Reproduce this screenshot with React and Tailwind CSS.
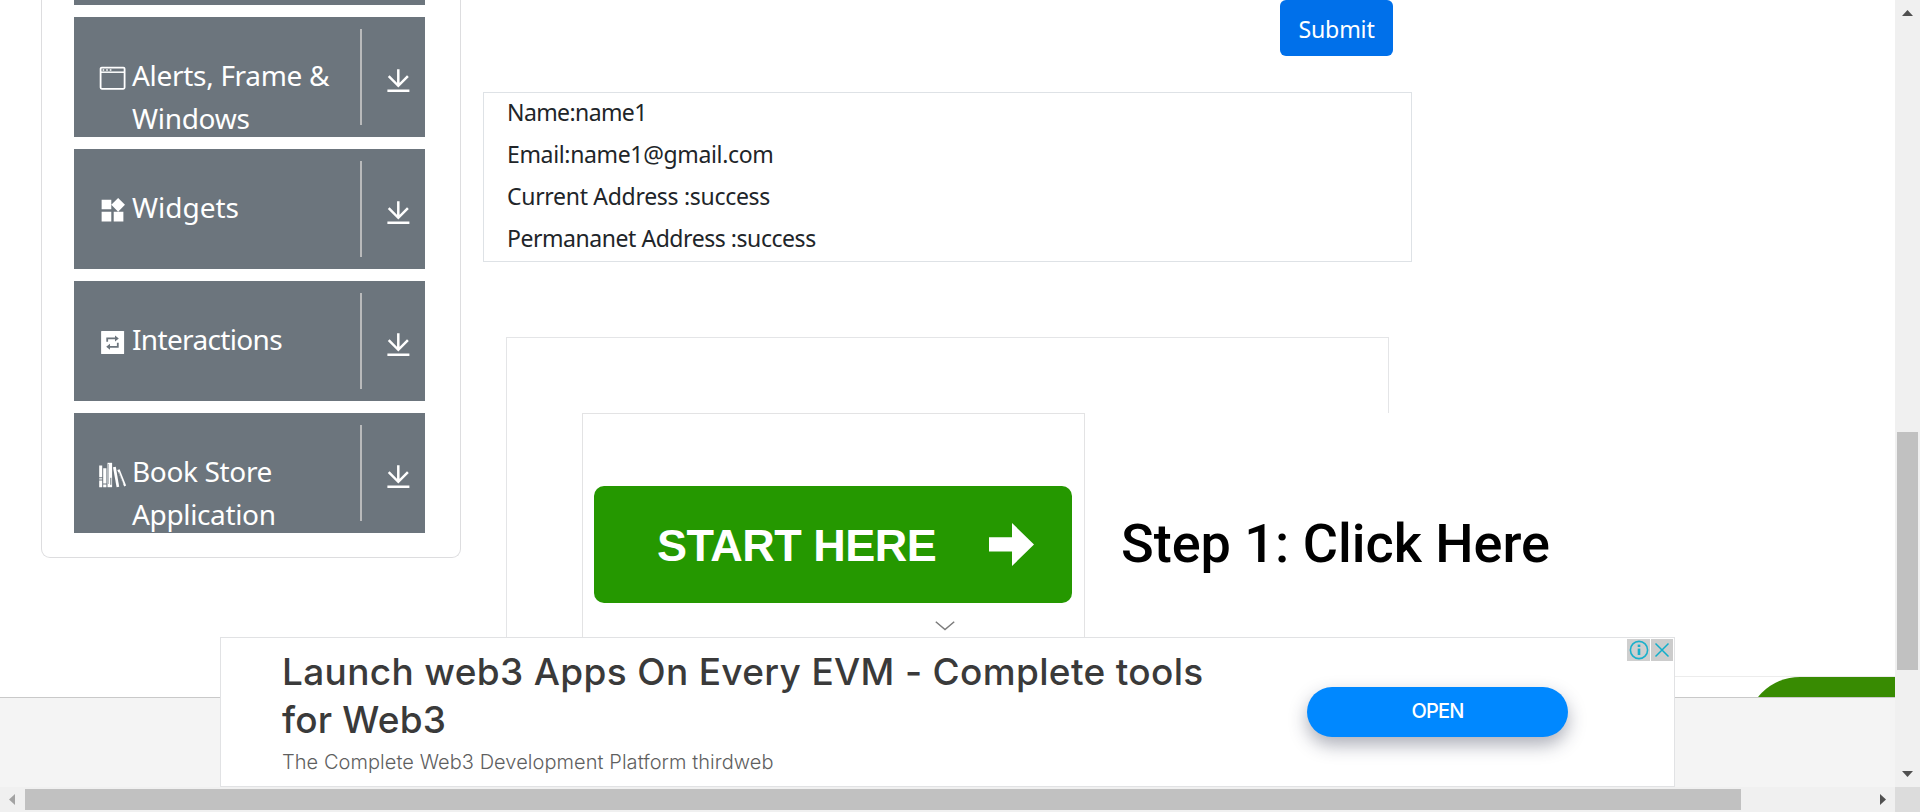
const BrowserIcon = () => (
  <svg viewBox="0 0 29 29" className="size-[29px]" fill="none" stroke="#fff">
    <rect x="2.6" y="3.6" width="24" height="21.2" rx="1.2" strokeWidth="1.8" />
    <path d="M2.6 8.2h24" strokeWidth="1.5" />
    <path d="M4.6 6h1.6M8.2 6h1.6M11.8 6h1.6" strokeWidth="1.5" />
  </svg>
);

const WidgetsIcon = () => (
  <svg viewBox="0 0 24 24" className="size-[29px]" fill="#fff">
    <path d="M13 13v8h8v-8h-8zM3 21h8v-8H3v8zM3 3v8h8V3H3zm13.66-1.31L11 7.34 16.66 13l5.66-5.66-5.66-5.65z" />
  </svg>
);

const RepeatIcon = () => (
  <svg viewBox="0 0 29 29" className="size-[29px]">
    <rect x="3.1" y="3" width="23" height="23" rx="0.6" fill="#fff" />
    <g fill="none" stroke="#6c757d" strokeWidth="1.8">
      <path d="M9.2 13.8v-3.4h8.6" />
      <path d="M19.8 14.8v4h-8.6" />
    </g>
    <path d="M17 7.4l3.8 3-3.8 3zM12 15.8l-3.8 3 3.8 3z" fill="#6c757d" />
  </svg>
);

const BooksIcon = () => (
  <svg viewBox="0 0 29 29" className="size-[29px]">
    <path d="M1.2 5.5h3v11.8h-3zM1.2 18.3h3v1.3h-3zM1.2 20.5h3v6.7h-3z" fill="#fff" />
    <path d="M5.2 8.2h3.2v15.2H5.2zM5.2 24.4h3.2v2.8H5.2z" fill="#fff" />
    <path d="M9.5 2.8h4.6v24.4H9.5z" fill="#fff" />
    <path d="M9.5 4h1.4v20H9.5z" fill="#b4b9be" />
    <path d="M12.8 17.8v7" stroke="#6c757d" strokeWidth="1" />
    <path d="M15 7.2l2.8-.4 3.4 20-2.6.4z" fill="#fff" />
    <path d="M19.3 10l2.3-.8 6.5 16.4-1.9.9z" fill="#fff" />
    <path d="M20.7 12.2l4.4 11.6" stroke="#6c757d" strokeWidth="0.7" />
  </svg>
);

const DownloadIcon = () => (
  <svg viewBox="0 0 24 26" className="h-[26px] w-[24px]" fill="none" stroke="#fff" strokeWidth="2.5">
    <path d="M11.3 1.2v17M1.7 8.2l9.6 9.6 9.6-9.6M0.4 22.8h22" />
  </svg>
);

const MENU = [
  { label: 'Alerts, Frame & Windows', Icon: BrowserIcon, tracking: 'tracking-[-0.3px]' },
  { label: 'Widgets', Icon: WidgetsIcon, tracking: 'tracking-[0px]' },
  { label: 'Interactions', Icon: RepeatIcon, tracking: 'tracking-[-0.65px]' },
  { label: 'Book Store Application', Icon: BooksIcon, tracking: 'tracking-[-0.35px]' },
];

function MenuRow({ label, Icon, tracking }) {
  return (
    <div className="flex h-[120px] shrink-0 overflow-hidden bg-[#6c757d] pl-[24px] text-white">
      <div className="mt-[47px] mr-[5px] shrink-0">
        <Icon />
      </div>
      <div className={`w-[211px] shrink-0 pt-[37px] text-[28px] leading-[43px] ${tracking}`}>{label}</div>
      <div className="mt-3 ml-[17px] h-24 w-[2px] shrink-0 bg-[#b9babb]" />
      <div className="mt-[51px] ml-[25px] shrink-0">
        <DownloadIcon />
      </div>
    </div>
  );
}

function Sidebar() {
  return (
    <aside className="ml-[41px] flex h-[558px] w-[420px] shrink-0 flex-col gap-3 rounded-b-[9px] border border-t-0 border-[#dddddf] pr-[35px] pl-8">
      <div className="h-[5px] shrink-0 bg-[#6c757d]" />
      {MENU.map((m) => (
        <MenuRow key={m.label} {...m} />
      ))}
    </aside>
  );
}

function Output() {
  return (
    <div className="mt-9 h-[170px] w-[929px] border border-[#dee2e6] pt-px pl-[23px] text-[23px] leading-[37px] text-[#212529]">
      <p className="mb-[5px] tracking-[-0.6px]">Name:name1</p>
      <p className="mb-[5px] tracking-[-0.35px]">Email:name1@gmail.com</p>
      <p className="mb-[5px] tracking-[-0.3px]">Current Address :success</p>
      <p className="tracking-[-0.45px]">Permananet Address :success</p>
    </div>
  );
}

function InlineAd() {
  return (
    <div className="mt-[75px] ml-[23px] h-[420px] w-[883px] border border-[#e4e5e7] pt-[75px] pl-[75px]">
      <div className="flex h-[264px] w-[1313px] border-b border-[#ececec] bg-white">
        <div className="flex w-[503px] shrink-0 flex-col items-center border border-b-0 border-[#e3e3e4] pt-[72px]">
          <div className="mr-px flex h-[117px] w-[478px] items-center rounded-[10px] bg-[#259800] pl-[63px] font-['Liberation_Sans',sans-serif] text-[45px] leading-[50px] font-bold tracking-[-0.5px] text-white">
            <span className="w-[332px] pt-[3px]">START HERE</span>
            <svg viewBox="0 0 45 43" className="h-[43px] w-[45px]" fill="#fff">
              <path d="M0 14.2h23V0l22 21.5L23 43V28.4H0z" />
            </svg>
          </div>
        </div>
        <div className="pt-[99px] pl-[36px] font-['Roboto',sans-serif] text-[54px] leading-[64px] font-medium whitespace-nowrap text-black">
          Step 1: Click Here
        </div>
      </div>
    </div>
  );
}

function AnchorAd() {
  return (
    <div className="absolute top-[637px] left-[220px] flex h-[150px] w-[1455px] border border-[#e1e2e4] bg-white font-['Inter',sans-serif]">
      <svg viewBox="0 0 20 10" className="absolute top-[-17px] left-[714px] h-[10px] w-[20px]" fill="none" stroke="#7c7c7c" strokeWidth="1.5">
        <path d="M0.8 0.8L10 8.6l9.2-7.8" />
      </svg>
      <div className="w-[1086px] pt-[10px] pl-[61px]">
        <div className="text-[37px] leading-[48px] font-[450] whitespace-nowrap text-[#3a3a3a]">
          <div className="tracking-[0.34px]">Launch web3 Apps On Every EVM - Complete tools</div>
          <div className="tracking-[0.2px]">for Web3</div>
        </div>
        <div className="mt-[5px] text-[20px] leading-[26px] font-light tracking-[0.06px] text-[#5f5f5f]">
          The Complete Web3 Development Platform thirdweb
        </div>
      </div>
      <div className="mt-[49px] flex h-[50px] w-[261px] items-center justify-center rounded-full bg-[#0088ff] pb-[3px] text-[20px] font-medium tracking-[-0.8px] text-white shadow-[0_8px_18px_rgba(40,45,70,0.38)]">
        OPEN
      </div>
      <div className="mt-px ml-[59px] flex h-[22px] gap-px">
        <div className="flex w-[23px] items-center justify-center bg-[#cfcfcf]">
          <svg viewBox="0 0 20 20" className="size-[20px]" fill="none" stroke="#1bb0cb">
            <circle cx="10" cy="10" r="8.6" strokeWidth="1.6" />
            <path d="M10 8.6v6.4" strokeWidth="2.6" />
            <path d="M10 4.6v2.4" strokeWidth="2.6" />
          </svg>
        </div>
        <div className="flex w-[22px] items-center justify-center bg-[#cccccc]">
          <svg viewBox="0 0 16 16" className="size-[16px]" fill="none" stroke="#12aeca" strokeWidth="1.5">
            <path d="M1.5 1.5l13 13M14.5 1.5l-13 13" />
          </svg>
        </div>
      </div>
    </div>
  );
}

export default function App() {
  return (
    <div className="relative flex h-[812px] w-[1920px] flex-col overflow-hidden bg-white font-['Noto_Sans',sans-serif]">
      <div className="flex h-[787px]">
        <div className="flex w-[1895px] flex-col overflow-hidden">
          <div className="flex h-[697px] shrink-0 overflow-hidden">
            <Sidebar />
            <main className="ml-[22px] w-[1412px] shrink-0">
              <div className="flex w-[910px] justify-end">
                <button className="h-14 w-[113px] rounded-[6px] bg-[#0070ea] pt-[3px] text-[23.2px] tracking-[-0.2px] text-white">Submit</button>
              </div>
              <Output />
              <InlineAd />
            </main>
          </div>
          <footer className="h-[90px] border-t border-[#c9c9c9] bg-[#f4f4f4]" />
        </div>
        <div className="flex w-[25px] flex-col items-center justify-between bg-[#f0f0f0] pt-[10px] pb-[10px]">
          <svg viewBox="0 0 11 6" className="h-[6px] w-[11px]" fill="#505050"><path d="M0 6L5.5 0 11 6z" /></svg>
          <div className="mt-[315px] h-[238px] w-[21px] bg-[#c1c1c1]" />
          <svg viewBox="0 0 11 6" className="h-[6px] w-[11px]" fill="#505050"><path d="M0 0l5.5 6L11 0z" /></svg>
        </div>
      </div>
      <div className="flex h-[25px]">
        <div className="flex w-[1895px] items-center bg-[#f0f0f0]">
          <svg viewBox="0 0 6 11" className="ml-[9px] h-[11px] w-[6px]" fill="#a3a3a3"><path d="M6 0L0 5.5 6 11z" /></svg>
          <div className="ml-[10px] h-[21px] w-[1716px] bg-[#c1c1c1]" />
          <svg viewBox="0 0 6 11" className="ml-[139px] h-[11px] w-[6px]" fill="#505050"><path d="M0 0l6 5.5L0 11z" /></svg>
        </div>
        <div className="w-[25px] bg-[#dcdcdc]" />
      </div>
      <div className="absolute top-[677px] left-[1746px] h-[20px] w-[149px] overflow-hidden">
        <div className="h-[108px] w-[300px] rounded-full bg-[#388b02]" />
      </div>
      <AnchorAd />
    </div>
  );
}
